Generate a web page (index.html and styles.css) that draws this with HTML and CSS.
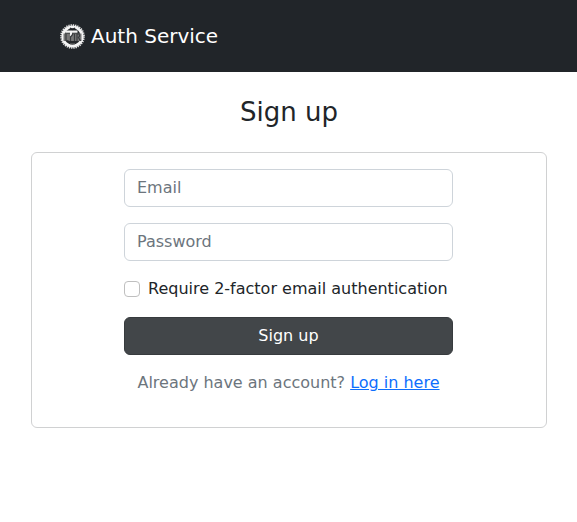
FILE: index.html
```html
<!DOCTYPE html>
<html lang="en">
<head>
  <meta charset="utf-8">
  <meta name="viewport" content="width=device-width, initial-scale=1">
  <title>Auth Service</title>
  <link rel="stylesheet" href="styles.css">
</head>
<body>
  <header class="navbar">
    <a class="brand" href="#">
      <svg class="brand-logo" viewBox="0 0 50 50" aria-hidden="true">
        <circle cx="25" cy="25" r="23" fill="none" stroke="#e4e4e4" stroke-width="3.4" stroke-dasharray="2.6 1.915"/>
        <circle cx="25" cy="25" r="19.4" fill="#25282b" stroke="#f4f4f4" stroke-width="5.6"/>
        <path d="M7 19h36v15H7z" fill="#777"/>
        <path d="M11 13h24v4.500H11zM20 16h4v8h-4z" fill="#f4f4f4"/>
        <path d="M12 20v13h5M26 20l-5 6v8M29 20v14M34 34V20h4q3 4-1 7l4 7" fill="none" stroke="#393c3f" stroke-width="2.400"/>
        <path d="M20 8l5 3 5-3" fill="none" stroke="#202326" stroke-width="2.500"/>
        <path d="M20 40h10" stroke="#777" stroke-width="2"/>
      </svg>
      <span>Auth Service</span>
    </a>
  </header>
  <main class="page">
    <h1 class="title">Sign up</h1>
    <section class="card">
      <form class="form">
        <input class="field" type="email" placeholder="Email" aria-label="Email">
        <input class="field" type="password" placeholder="Password" aria-label="Password">
        <div class="check">
          <input class="check-box" type="checkbox" id="two-factor">
          <label for="two-factor">Require 2-factor email authentication</label>
        </div>
        <button class="submit" type="button">Sign up</button>
        <p class="hint">Already have an account? <a href="#">Log in here</a></p>
      </form>
    </section>
  </main>
</body>
</html>
```
FILE: styles.css
```css
* {
  box-sizing: border-box;
}

body {
  margin: 0;
  background: #fff;
  color: #212529;
  font: 16px/24px "DejaVu Sans", sans-serif;
}

.navbar {
  padding: 16px 60px;
  background: #212529;
}

.brand {
  display: flex;
  align-items: center;
  gap: 6px;
  height: 40px;
  color: #fff;
  font-size: 20px;
  text-decoration: none;
}

.brand-logo {
  width: 25px;
  height: 25px;
}

.page {
  padding: 24px 30px 24px 31px;
}

.title {
  margin: 0 0 24px;
  font-size: 26px;
  font-weight: 400;
  line-height: 32px;
  text-align: center;
}

.card {
  padding: 16px 93px 32px 92px;
  border: 1px solid #d0d1d2;
  border-radius: 6px;
}

.form {
  display: flex;
  flex-direction: column;
  gap: 16px;
}

.field {
  width: 100%;
  height: 38px;
  padding: 5px 12px 7px;
  border: 1px solid #ced4da;
  border-radius: 6px;
  background: #fff;
  color: #212529;
  font: inherit;
}

.field::placeholder {
  color: #6c757d;
  opacity: 1;
}

.check {
  display: flex;
  align-items: center;
  gap: 8px;
  white-space: nowrap;
}

.check-box {
  appearance: none;
  flex: none;
  width: 16px;
  height: 16px;
  margin: 0;
  border: 1px solid #bfbfbf;
  border-radius: 4px;
  background: #fff;
}

.check-box:checked {
  border-color: #0d6efd;
  background: #0d6efd;
}

.submit {
  height: 38px;
  padding: 6px 12px;
  border: 1px solid #373b3e;
  border-radius: 6px;
  background: #424649;
  color: #fff;
  font: inherit;
}

.hint {
  margin: 0;
  color: #6c757d;
  text-align: center;
}

.hint a {
  color: #0d6efd;
}
```
